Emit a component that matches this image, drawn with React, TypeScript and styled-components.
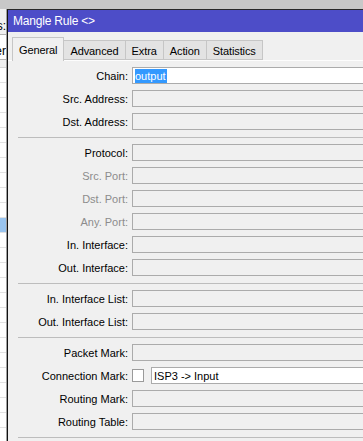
import styled, { createGlobalStyle } from 'styled-components';

const GlobalStyle = createGlobalStyle`
  html, body {
    margin: 0;
    padding: 0;
    overflow: hidden;
    background: #c8c8c8;
  }
  body {
    font-family: "Liberation Sans", Arial, sans-serif;
    font-size: 11px;
    color: #000;
  }
`;

const Page = styled.div`
  display: flex;
  flex-direction: column;
  width: 363px;
  height: 441px;
  overflow: hidden;
`;

const TopBand = styled.div`
  height: 9px;
  background: #c8c8c8;
  flex-shrink: 0;
`;

const Body = styled.div`
  display: flex;
  flex: 1;
  min-height: 0;
`;

// window behind, only a sliver shows on the left
const BackList = styled.div`
  width: 7px;
  flex-shrink: 0;
  display: flex;
  flex-direction: column;
  overflow: hidden;
  background: #fff;
  border-right: 1px solid #a0a0a0;
  box-sizing: border-box;
`;

const BackLabel = styled.div<{ $white?: boolean }>`
  height: ${(p) => (p.$white ? 25 : 26)}px;
  flex-shrink: 0;
  display: flex;
  align-items: flex-end;
  justify-content: flex-end;
  padding-bottom: 1px;
  box-sizing: border-box;
  background: ${(p) => (p.$white ? '#fff' : '#f0f0f0')};
  border-bottom: 1px solid #b4b4b4;
  white-space: nowrap;
  font-size: 12px;
`;

const BackGap = styled.div`
  height: 7px;
  flex-shrink: 0;
  background: #f0f0f0;
  border-bottom: 1px solid #d6d6d6;
`;

const BackRow = styled.div<{ $selected?: boolean }>`
  height: 14px;
  flex-shrink: 0;
  border-bottom: 1px solid #e2e2e2;
  background: ${(p) => (p.$selected ? '#99c4ef' : '#fff')};
`;

const Window = styled.div`
  width: 440px;
  flex-shrink: 0;
  display: flex;
  flex-direction: column;
  background: #f0f0f0;
  border-top: 1px solid #2a2a2a;
  border-left: 1px solid #111;
`;

const TitleBar = styled.div`
  height: 22px;
  display: flex;
  align-items: center;
  padding-left: 5px;
  background: #4d4dc8;
  color: #fff;
  font-size: 12px;
  letter-spacing: -0.2px;
`;

const TabStrip = styled.div`
  height: 28px;
  display: flex;
  align-items: flex-end;
  padding-left: 5px;
  border-bottom: 1px solid #fdfdfd;
  position: relative;
`;

const Tab = styled.div<{ $active?: boolean }>`
  height: ${(p) => (p.$active ? 24 : 20)}px;
  padding: 0 6px;
  display: flex;
  align-items: center;
  box-sizing: border-box;
  background: ${(p) => (p.$active ? '#f0f0f0' : '#e3e3e3')};
  border: 1px solid #c6c6c6;
  border-bottom: ${(p) => (p.$active ? 'none' : '1px solid #c6c6c6')};
  margin-bottom: ${(p) => (p.$active ? -1 : 0)}px;
  margin-left: -1px;
  position: relative;
  z-index: ${(p) => (p.$active ? 1 : 0)};
  padding-top: ${(p) => (p.$active ? 0 : 1)}px;
  letter-spacing: -0.1px;
`;

const Form = styled.div`
  display: grid;
  grid-template-columns: 120px 1fr;
  column-gap: 4px;
  row-gap: 6px;
  padding-top: 6px;
`;

const Label = styled.div<{ $disabled?: boolean }>`
  height: 17px;
  display: flex;
  align-items: center;
  justify-content: flex-end;
  white-space: nowrap;
  color: ${(p) => (p.$disabled ? '#8c8c8c' : '#000')};
`;

const Field = styled.div<{ $white?: boolean }>`
  height: 17px;
  flex: 1;
  box-sizing: border-box;
  display: flex;
  align-items: center;
  padding-left: 2px;
  background: ${(p) => (p.$white ? '#fff' : '#f0f0f0')};
  border: 1px solid #ababab;
  border-right: none;
  white-space: nowrap;
`;

const Selected = styled.span`
  background: #3399ff;
  color: #fff;
  padding: 1px 1px 1px 0;
`;

const FieldGroup = styled.div`
  display: flex;
  align-items: center;
  gap: 7px;
`;

const Check = styled.div`
  width: 12px;
  height: 13px;
  box-sizing: border-box;
  background: #fff;
  border: 1px solid #9a9a9a;
  flex-shrink: 0;
`;

const Separator = styled.div`
  grid-column: 1 / -1;
  height: 1px;
  margin: 1px 0 0 10px;
  background: #bdbdbd;
`;

type Row = { label: string; disabled?: boolean } | 'sep';

const rows: Row[] = [
  { label: 'Src. Address:' },
  { label: 'Dst. Address:' },
  'sep',
  { label: 'Protocol:' },
  { label: 'Src. Port:', disabled: true },
  { label: 'Dst. Port:', disabled: true },
  { label: 'Any. Port:', disabled: true },
  { label: 'In. Interface:' },
  { label: 'Out. Interface:' },
  'sep',
  { label: 'In. Interface List:' },
  { label: 'Out. Interface List:' },
  'sep',
  { label: 'Packet Mark:' },
];

const tabs = ['General', 'Advanced', 'Extra', 'Action', 'Statistics'];

export default function App() {
  return (
    <Page>
      <GlobalStyle />
      <TopBand />
      <Body>
        <BackList>
          <BackLabel>ss:</BackLabel>
          <BackLabel $white>er</BackLabel>
          <BackGap />
          {Array.from({ length: 25 }).map((_, i) => (
            <BackRow key={i} $selected={i === 10} />
          ))}
        </BackList>
        <Window>
          <TitleBar>Mangle Rule &lt;&gt;</TitleBar>
          <TabStrip>
            {tabs.map((t, i) => (
              <Tab key={t} $active={i === 0}>
                {t}
              </Tab>
            ))}
          </TabStrip>
          <Form>
            <Label>Chain:</Label>
            <Field $white>
              <Selected>output</Selected>
            </Field>
            {rows.map((r, i) =>
              r === 'sep' ? (
                <Separator key={i} />
              ) : (
                <>
                  <Label key={'l' + i} $disabled={r.disabled}>
                    {r.label}
                  </Label>
                  <Field key={'f' + i} />
                </>
              )
            )}
            <Label>Connection Mark:</Label>
            <FieldGroup>
              <Check />
              <Field $white>ISP3 -&gt; Input</Field>
            </FieldGroup>
            <Label>Routing Mark:</Label>
            <Field />
            <Label>Routing Table:</Label>
            <Field />
            <Separator />
          </Form>
        </Window>
      </Body>
    </Page>
  );
}
